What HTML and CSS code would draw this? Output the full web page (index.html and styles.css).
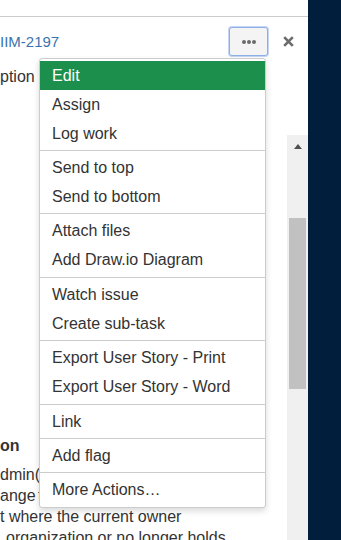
FILE: index.html
```html
<!DOCTYPE html>
<html lang="en">
<head>
  <meta charset="UTF-8" />
  <meta name="viewport" content="width=device-width, initial-scale=1.0"/>
  <title>IIM-2197</title>
  <link rel="stylesheet" href="styles.css">
</head>
<body>
<div class="panel">
  <div class="topbar"></div>

  <div class="issue-header">
    <a class="issue-key" href="#">IIM-2197</a>
    <div class="actions">
      <div class="more-wrap">
        <button class="more-btn" type="button" aria-label="More">
          <svg width="14" height="4" viewBox="0 0 14 4">
            <circle cx="2" cy="2" r="2" fill="#6b6b6b"/>
            <circle cx="7" cy="2" r="2" fill="#6b6b6b"/>
            <circle cx="12" cy="2" r="2" fill="#6b6b6b"/>
          </svg>
        </button>

        <div class="menu">
          <div class="menu-group">
            <div class="menu-item active">Edit</div>
            <div class="menu-item">Assign</div>
            <div class="menu-item">Log work</div>
          </div>
          <div class="menu-group">
            <div class="menu-item">Send to top</div>
            <div class="menu-item">Send to bottom</div>
          </div>
          <div class="menu-group">
            <div class="menu-item">Attach files</div>
            <div class="menu-item">Add Draw.io Diagram</div>
          </div>
          <div class="menu-group">
            <div class="menu-item">Watch issue</div>
            <div class="menu-item">Create sub-task</div>
          </div>
          <div class="menu-group">
            <div class="menu-item">Export User Story - Print</div>
            <div class="menu-item">Export User Story - Word</div>
          </div>
          <div class="menu-group">
            <div class="menu-item">Link</div>
          </div>
          <div class="menu-group">
            <div class="menu-item">Add flag</div>
          </div>
          <div class="menu-group">
            <div class="menu-item">More Actions…</div>
          </div>
        </div>
      </div>
      <button class="close-btn" type="button" aria-label="Close">
        <svg width="11" height="11" viewBox="0 0 11 11">
          <path d="M1.2 1.2 L9.8 9.8 M9.8 1.2 L1.2 9.8" stroke="#6b6b6b" stroke-width="2.6" fill="none"/>
        </svg>
      </button>
    </div>
  </div>

  <div class="panel-body">
    <div class="content">
      <div class="field-label">ption <span class="edit-dot"></span></div>

      <h4 class="section-title">on</h4>
      <div class="desc-line">dmin(<span class="mention">admin</span>)</div>
      <div class="desc-line tight">ange to the owner</div>
      <div class="desc-line">t where the current owner</div>
      <div class="desc-line indent">organization or no longer holds</div>
    </div>

    <div class="scrollbar">
      <div class="scroll-arrow"></div>
      <div class="scroll-thumb"></div>
    </div>
  </div>
</div>
</body>
</html>
```

FILE: styles.css
```css
body {
  margin: 0;
  padding: 0;
  background-color: #011e3c;
  font-family: 'Liberation Sans', Arial, sans-serif;
  color: #333;
}

.panel {
  width: 308px;
  height: 540px;
  background-color: #fff;
  display: flex;
  flex-direction: column;
  overflow: hidden;
}

.topbar {
  height: 16px;
  flex-shrink: 0;
  border-bottom: 1px solid #ccc;
}

.issue-header {
  display: flex;
  align-items: center;
  padding-top: 10px;
  flex-shrink: 0;
}

.issue-key {
  font-size: 15px;
  color: #3b73af;
  text-decoration: none;
}

.actions {
  margin-left: auto;
  display: flex;
  align-items: center;
  gap: 8px;
  padding-right: 8px;
}

.more-wrap {
  position: relative;
}

.more-btn {
  width: 39px;
  height: 29px;
  padding: 0;
  display: flex;
  align-items: center;
  justify-content: center;
  background-color: #f4f4f4;
  border: 1px solid #8fb0e6;
  border-radius: 3px;
  box-shadow: 0 0 0 1px #c3d5f3;
}

.close-btn {
  width: 24px;
  height: 29px;
  padding: 0;
  display: flex;
  align-items: center;
  justify-content: center;
  background: none;
  border: none;
}

.menu {
  position: absolute;
  top: 31px;
  left: -190px;
  width: 227px;
  box-sizing: border-box;
  background-color: #fff;
  border: 1px solid #ccc;
  border-radius: 3px;
  box-shadow: 0 3px 6px rgba(0, 0, 0, 0.15);
  z-index: 10;
}

.menu-group {
  padding: 2px 0;
}

.menu-group + .menu-group {
  border-top: 1px solid #ccc;
  padding-bottom: 2.4px;
}

.menu-item {
  height: 29px;
  line-height: 29px;
  padding: 0 12px;
  font-size: 16px;
  color: #333;
  white-space: nowrap;
}

.menu-item.active {
  background-color: #1b8f4b;
  color: #fff;
}

.panel-body {
  flex: 1;
  display: flex;
  min-height: 0;
}

.content {
  flex: 1;
  padding-top: 10px;
  font-size: 16px;
  line-height: 21px;
}

.field-label {
  white-space: nowrap;
}

.edit-dot {
  display: inline-block;
  width: 10px;
  height: 10px;
  margin-left: 1px;
  border-radius: 50%;
  background-color: #f0a23c;
}

.section-title {
  margin: 348px 0 8px;
  font-size: 16px;
  line-height: 21px;
  font-weight: bold;
}

.desc-line {
  white-space: nowrap;
}

.desc-line.tight {
  word-spacing: -2px;
}

.desc-line.indent {
  padding-left: 6px;
}

.mention {
  color: #e8922b;
}

.scrollbar {
  width: 21px;
  margin-top: 79px;
  background-color: #f0f0f0;
  display: flex;
  flex-direction: column;
  align-items: center;
}

.scroll-arrow {
  width: 0;
  height: 0;
  margin-top: 9px;
  margin-bottom: 7px;
  border-left: 4.5px solid transparent;
  border-right: 4.5px solid transparent;
  border-bottom: 5px solid #505050;
}

.scroll-thumb {
  width: 17px;
  height: 171px;
  margin-top: 62px;
  background-color: #c1c1c1;
}
```
